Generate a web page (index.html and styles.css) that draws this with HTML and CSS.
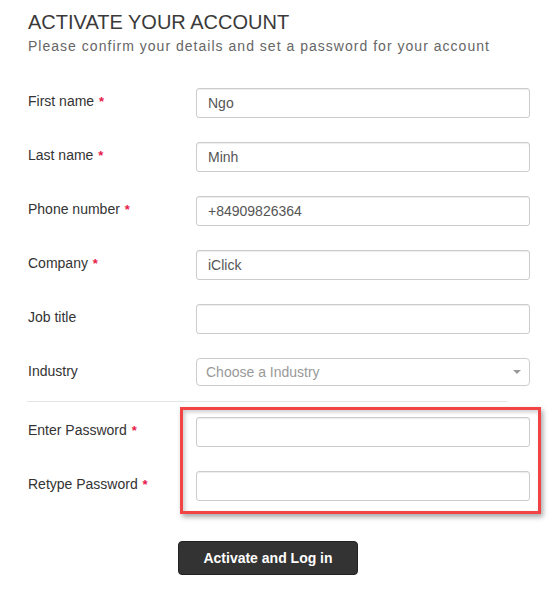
FILE: index.html
```html
<!DOCTYPE html>
<html>
<head>
<meta charset="utf-8">
<link rel="stylesheet" href="styles.css">
</head>
<body>
<div class="page">
  <h1 class="title">ACTIVATE YOUR ACCOUNT</h1>
  <p class="subtitle">Please confirm your details and set a password for your account</p>
  <form class="form">
    <div class="row"><label class="label">First name <span class="req">*</span></label><input class="input" type="text" value="Ngo"></div>
    <div class="row"><label class="label">Last name <span class="req">*</span></label><input class="input" type="text" value="Minh"></div>
    <div class="row"><label class="label">Phone number <span class="req">*</span></label><input class="input" type="text" value="+84909826364"></div>
    <div class="row"><label class="label">Company <span class="req">*</span></label><input class="input" type="text" value="iClick"></div>
    <div class="row"><label class="label">Job title</label><input class="input" type="text" value=""></div>
    <div class="row row-select"><label class="label">Industry</label><div class="select"><span class="placeholder">Choose a Industry</span><span class="caret"></span></div></div>
    <hr class="divider">
    <div class="row"><label class="label">Enter Password <span class="req">*</span></label><input class="input" type="password" value=""></div>
    <div class="row"><label class="label">Retype Password <span class="req">*</span></label><input class="input" type="password" value=""></div>
    <div class="actions"><button type="button" class="btn">Activate and Log in</button></div>
  </form>
  <div class="highlight"></div>
</div>
</body>
</html>
```
FILE: styles.css
```css
* { box-sizing: border-box; }
html, body { margin: 0; padding: 0; background: #fff; }
body { font-family: "Liberation Sans", Arial, sans-serif; color: #333; }
.page { position: relative; width: 560px; height: 592px; padding: 10px 0 0 28px; }
.title { margin: 0; font-size: 20px; font-weight: normal; line-height: 24px; color: #3a3a3a; }
.subtitle { margin: 3px 0 0; font-size: 14px; line-height: 18px; letter-spacing: 1.02px; color: #666; }
.form { margin-top: 33px; }
.row { display: flex; align-items: flex-start; height: 54px; }
.label { width: 168px; flex: none; font-size: 14px; line-height: 20px; padding-top: 3px; color: #333; }
.req { color: #e8194a; font-size: 13px; font-weight: bold; margin-left: 1px; }
.input { width: 334px; height: 30px; border: 1px solid #ccc; border-radius: 3px; padding: 0 11px; font-family: "Liberation Sans", Arial, sans-serif; font-size: 14px; color: #555; box-shadow: inset 0 1px 1px rgba(0,0,0,0.075); outline: none; background: #fff; }
.row-select { height: 43px; }
.select { width: 334px; height: 28px; border: 1px solid #ccc; border-radius: 4px; display: flex; align-items: center; justify-content: space-between; padding: 0 8px 0 9px; background: #fff; }
.placeholder { font-size: 14px; color: #999; }
.caret { width: 0; height: 0; border-left: 4px solid transparent; border-right: 4px solid transparent; border-top: 4px solid #999; }
.divider { margin: 0 0 15px -1px; width: 480px; border: 0; border-top: 1px solid #e5e5e5; height: 0; }
.actions { padding: 16px 0 0 150px; }
.btn { width: 180px; height: 34px; background: #333; color: #fff; border: 1px solid #222; border-radius: 4px; font-family: "Liberation Sans", Arial, sans-serif; font-size: 14px; font-weight: bold; cursor: pointer; }
.highlight { position: absolute; left: 180px; top: 407px; width: 361px; height: 107px; border: 3px solid #f24444; box-shadow: 2px 3px 5px rgba(0,0,0,0.35), inset 2px 2px 4px rgba(0,0,0,0.2); pointer-events: none; }
```
